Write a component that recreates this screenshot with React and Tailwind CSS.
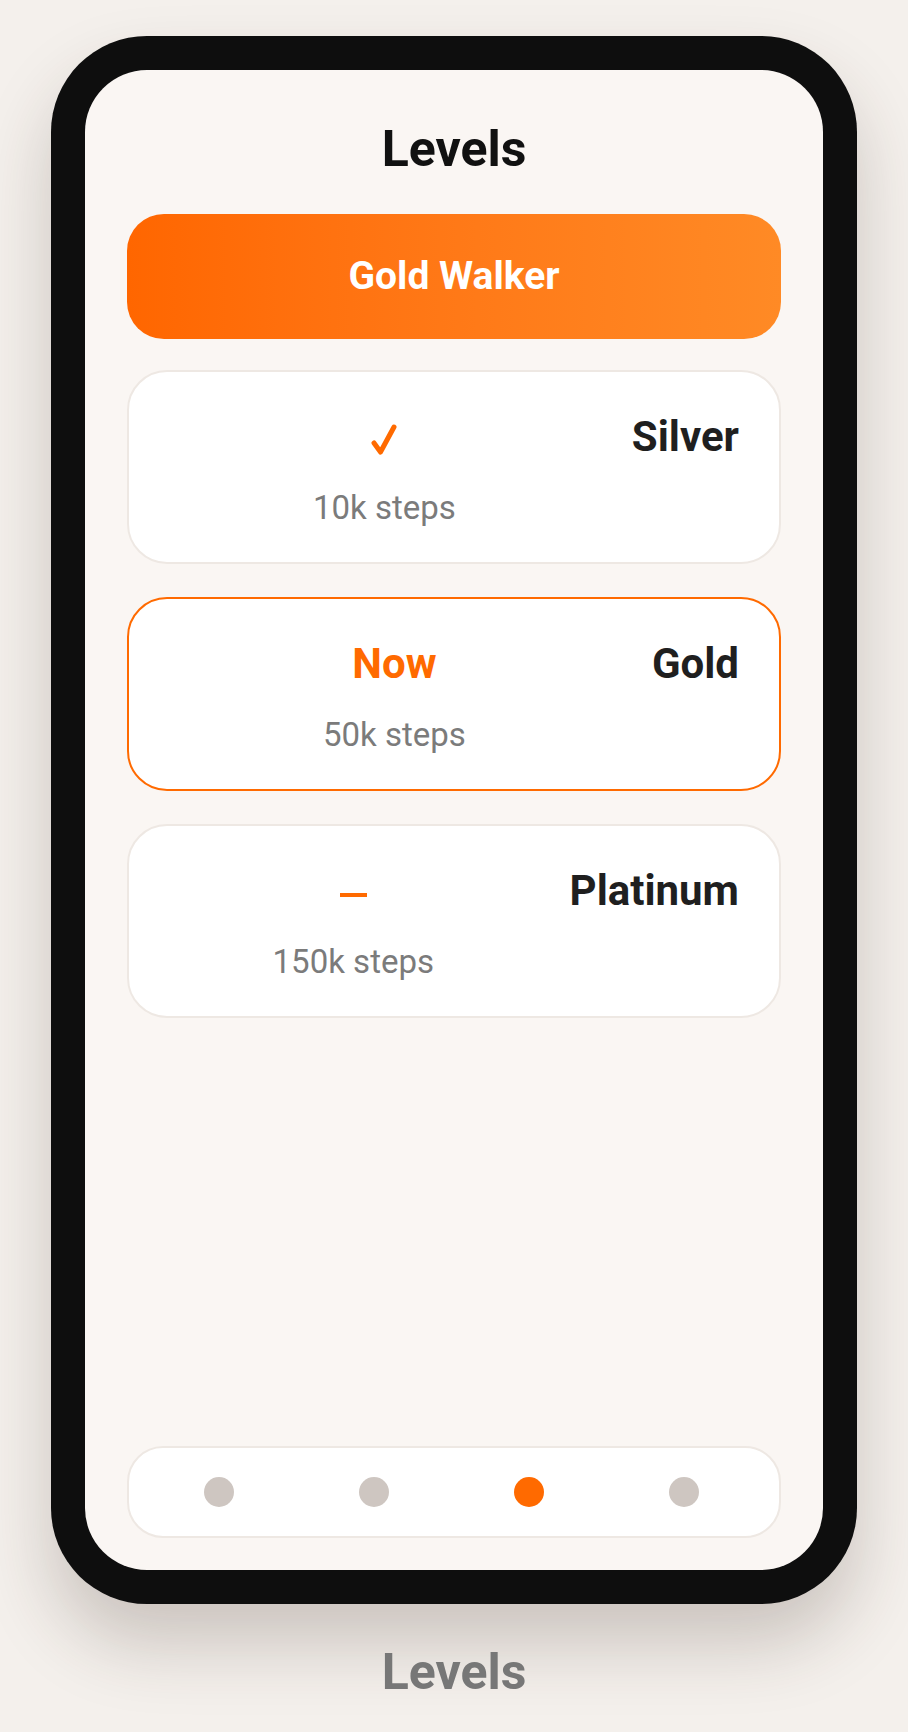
const LEVELS = [
  { name: "Silver", steps: "10k steps", status: "done" },
  { name: "Gold", steps: "50k steps", status: "now" },
  { name: "Platinum", steps: "150k steps", status: "locked" },
];

function Check() {
  return (
    <svg width="28" height="32" viewBox="0 0 28 32" fill="none">
      <path d="M4 20 L10.5 29 L24 4" stroke="#ff6a00" strokeWidth="5" strokeLinecap="round" strokeLinejoin="round" />
    </svg>
  );
}

function Status({ status }) {
  if (status === "done") {
    return (
      <div className="flex h-[48px] items-center justify-center pt-[4px]">
        <Check />
      </div>
    );
  }
  if (status === "now") {
    return <p className="h-[48px] text-[42px] leading-[48px] font-bold text-[#ff6a00]">Now</p>;
  }
  return (
    <div className="flex h-[48px] items-center justify-center pt-[8px]">
      <div className="h-[4px] w-[27px] bg-[#ff6a00]" />
    </div>
  );
}

function LevelCard({ level }) {
  const current = level.status === "now";
  return (
    <div
      className={`flex h-[194px] items-start gap-[32px] rounded-[40px] border-2 bg-white px-[40px] pt-[41px] ${
        current ? "border-[#ff6a00]" : "border-[#eee8e3]"
      }`}
    >
      <div className="flex flex-1 flex-col items-center text-center">
        <Status status={level.status} />
        <p className="mt-[27px] text-[33px] leading-[40px] text-[#7b7b7b]">{level.steps}</p>
      </div>
      <p className="text-[42px] leading-[48px] font-bold text-[#1f1f1f]">{level.name}</p>
    </div>
  );
}

export default function App() {
  return (
    <div className="flex h-[1732px] w-[908px] flex-col items-center bg-[#f4f0ec] pt-[36px] font-['Roboto',sans-serif]">
      <div className="h-[1568px] w-[806px] rounded-[96px] bg-[#0e0e0e] p-[34px] shadow-[0_40px_70px_rgba(60,40,30,0.22)]">
        <div className="flex h-full flex-col rounded-[62px] bg-[#faf6f3] px-[42px] pt-[49px] pb-[32px]">
          <h1 className="text-center text-[50px] leading-[60px] font-bold text-[#111]">Levels</h1>

          <div className="mt-[35px] flex h-[125px] items-center justify-center rounded-[37px] bg-gradient-to-r from-[#ff6600] to-[#ff8a25]">
            <span className="text-[39px] font-bold text-white">Gold Walker</span>
          </div>

          <div className="mt-[31px] flex flex-col gap-[33px]">
            {LEVELS.map((level) => (
              <LevelCard key={level.name} level={level} />
            ))}
          </div>

          <div className="flex-1" />

          <nav className="grid h-[92px] grid-cols-4 items-center rounded-[36px] border-2 border-[#eee8e3] bg-white pr-[18px] pl-[12px]">
            {[false, false, true, false].map((active, i) => (
              <div key={i} className="flex justify-center">
                <span className={`h-[30px] w-[30px] rounded-full ${active ? "bg-[#ff6a00]" : "bg-[#cec6c1]"}`} />
              </div>
            ))}
          </nav>
        </div>
      </div>

      <p className="mt-[38px] text-[50px] leading-[60px] font-bold text-[#777]">Levels</p>
    </div>
  );
}
